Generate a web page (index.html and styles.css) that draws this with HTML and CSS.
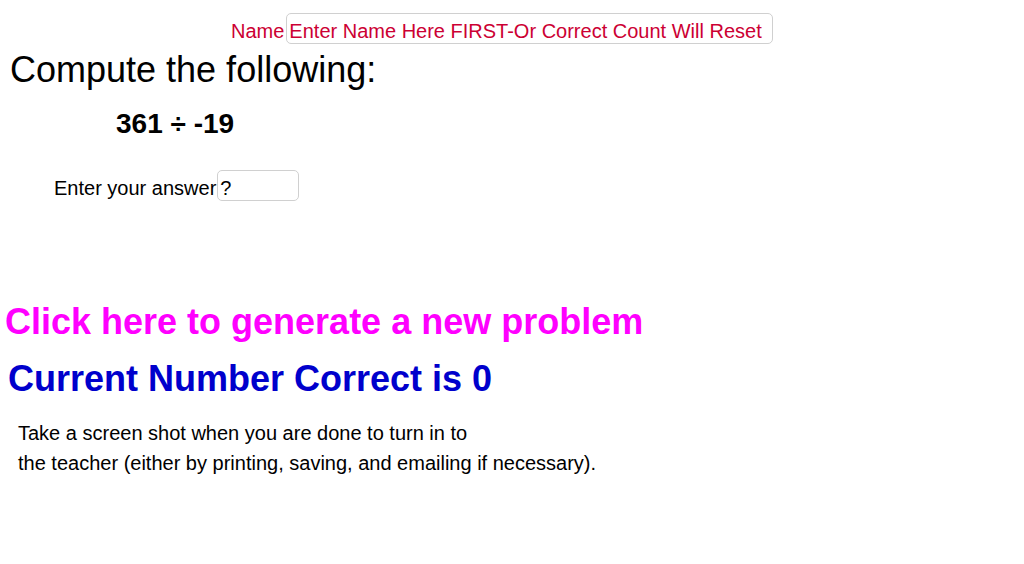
FILE: index.html
```html
<!DOCTYPE html>
<html>
<head>
<meta charset="utf-8">
<link rel="stylesheet" href="styles.css">
</head>
<body>
<div class="applet">
  <div class="name-row">
    <span class="name-label">Name</span><input class="name-input field" type="text" value="Enter Name Here FIRST-Or Correct Count Will Reset">
  </div>
  <div class="compute">Compute the following:</div>
  <div class="problem">361 ÷ -19</div>
  <div class="answer-row">
    <span class="answer-label">Enter your answer</span><input class="answer-input field" type="text" value="?">
  </div>
  <div class="generate">Click here to generate a new problem</div>
  <div class="correct">Current Number Correct is 0</div>
  <div class="note">Take a screen shot when you are done to turn in to<br>the teacher (either by printing, saving, and emailing if necessary).</div>
</div>
</body>
</html>
```

FILE: styles.css
```css
html, body {
  margin: 0;
  padding: 0;
  background: #ffffff;
}
body {
  font-family: "Liberation Sans", Arial, sans-serif;
  color: #000000;
  width: 1024px;
  height: 564px;
  overflow: hidden;
}
.applet {
  display: flow-root;
}
.name-row {
  margin-top: 13px;
  padding-left: 231px;
  height: 31px;
  display: flex;
  align-items: flex-start;
  gap: 2px;
}
.name-label {
  font-size: 20px;
  line-height: 20px;
  margin-top: 8px;
  color: #cc0033;
}
.field {
  box-sizing: border-box;
  height: 31px;
  border: 1px solid #d0d0d0;
  border-radius: 5px;
  padding: 6px 2px 0 2px;
  font-family: "Liberation Sans", Arial, sans-serif;
  font-size: 20px;
  line-height: 23px;
  background: #ffffff;
  outline: none;
  margin: 0;
}
.name-input {
  width: 487px;
  color: #cc0033;
}
.compute {
  margin-top: 8px;
  padding-left: 10px;
  font-size: 36px;
  line-height: 36px;
  height: 36px;
}
.problem {
  margin-top: 22px;
  padding-left: 116px;
  font-size: 28px;
  line-height: 28px;
  height: 28px;
  font-weight: bold;
}
.answer-row {
  margin-top: 32px;
  padding-left: 54px;
  height: 31px;
  display: flex;
  align-items: flex-start;
  gap: 1px;
}
.answer-label {
  font-size: 20px;
  line-height: 20px;
  margin-top: 8px;
}
.answer-input {
  width: 82px;
  color: #000000;
}
.generate {
  margin-top: 103px;
  padding-left: 5px;
  font-size: 36px;
  line-height: 36px;
  height: 36px;
  font-weight: bold;
  color: #ff00ff;
}
.correct {
  margin-top: 21px;
  padding-left: 8px;
  font-size: 36px;
  line-height: 36px;
  height: 36px;
  font-weight: bold;
  color: #0000cc;
}
.note {
  margin-top: 21px;
  padding-left: 18px;
  font-size: 20px;
  line-height: 30px;
}
```
